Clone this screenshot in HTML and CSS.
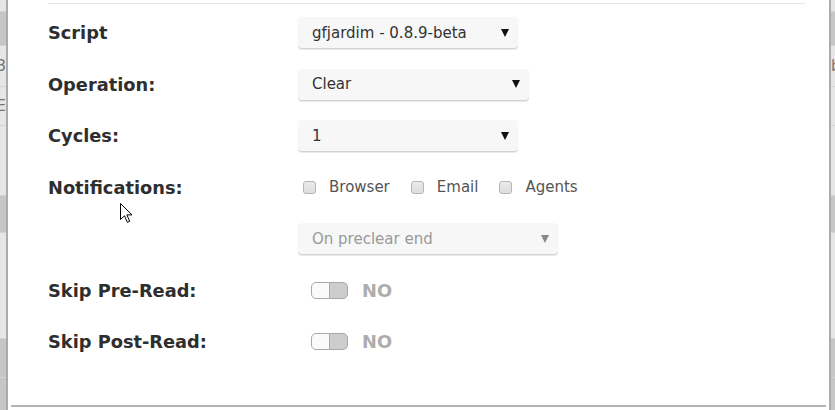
FILE: index.html
```html
<!DOCTYPE html>
<html lang="en">
<head>
    <meta charset="UTF-8">
    <meta name="viewport" content="width=device-width, initial-scale=1.0">
    <title>Preclear Disk</title>
    <link rel="stylesheet" href="styles.css">
</head>
<body>
    <div class="page">
        <div class="backdrop backdrop-left">
            <div class="band light b1"></div>
            <div class="band dark b2"></div>
            <div class="band light b3">3</div>
            <div class="band light b4">E</div>
            <div class="band light b5"></div>
            <div class="band dark b6"></div>
            <div class="band light b7"></div>
            <div class="band dark b8"></div>
            <div class="band dark b9"></div>
        </div>

        <div class="modal">
            <div class="modal-body">
                <div class="rule"></div>
                <form class="settings">
                    <div class="row">
                        <label class="label">Script</label>
                        <div class="select select-sm">
                            <span>gfjardim - 0.8.9-beta</span>
                            <span class="caret"></span>
                        </div>
                    </div>
                    <div class="row">
                        <label class="label">Operation:</label>
                        <div class="select select-md">
                            <span>Clear</span>
                            <span class="caret"></span>
                        </div>
                    </div>
                    <div class="row">
                        <label class="label">Cycles:</label>
                        <div class="select select-sm">
                            <span>1</span>
                            <span class="caret"></span>
                        </div>
                    </div>
                    <div class="row">
                        <label class="label">Notifications:</label>
                        <div class="checks">
                            <label class="check"><input type="checkbox"> Browser</label>
                            <label class="check"><input type="checkbox"> Email</label>
                            <label class="check"><input type="checkbox"> Agents</label>
                        </div>
                    </div>
                    <div class="row">
                        <span class="label"></span>
                        <div class="select select-lg disabled">
                            <span>On preclear end</span>
                            <span class="caret"></span>
                        </div>
                    </div>
                    <div class="row">
                        <label class="label">Skip Pre-Read:</label>
                        <div class="switch">
                            <span class="toggle"></span>
                            <span class="switch-text">NO</span>
                        </div>
                    </div>
                    <div class="row">
                        <label class="label">Skip Post-Read:</label>
                        <div class="switch">
                            <span class="toggle"></span>
                            <span class="switch-text">NO</span>
                        </div>
                    </div>
                </form>
            </div>
            <div class="footer-rule"></div>

            <svg class="cursor" width="14" height="20" viewBox="0 0 14 20">
                <path d="M0.5 0.5 L0.5 16.5 L4.5 12.8 L7.3 19.3 L9.7 18.3 L6.9 11.9 L12 11.9 Z" fill="#fff" stroke="#000" stroke-width="1" stroke-linejoin="miter"/>
            </svg>
        </div>

        <div class="backdrop backdrop-right">
            <div class="band light b1"></div>
            <div class="band dark b2"></div>
            <div class="band light b3">b</div>
            <div class="band light b4"></div>
            <div class="band light b5"></div>
            <div class="band dark b6"></div>
            <div class="band light b7"></div>
            <div class="band dark b8"></div>
            <div class="band dark b9"></div>
        </div>
    </div>
</body>
</html>
```

FILE: styles.css
```css
* {
    margin: 0;
    padding: 0;
    box-sizing: border-box;
}

body {
    background: #fff;
    font-family: 'DejaVu Sans', Verdana, sans-serif;
    color: #333;
    height: 410px;
    overflow: hidden;
}

.page {
    display: flex;
    height: 410px;
}

/* page behind the dialog */
.backdrop {
    display: flex;
    flex-direction: column;
    overflow: hidden;
    font-size: 15px;
    color: #777;
}

.backdrop-left {
    width: 6px;
    align-items: flex-end;
}

.backdrop-right {
    width: 4px;
}

.band {
    width: 100%;
    flex-shrink: 0;
    display: flex;
    align-items: center;
    border-bottom: 1px solid #d4d4d4;
}

.backdrop-left .band {
    justify-content: flex-end;
}

.band.light { background: #e6e6e6; }
.band.dark { background: #c6c6c6; }

.b1 { height: 12px; }
.b2 { height: 34px; }
.b3 { height: 41px; }
.b4 { height: 39px; }
.b5 { height: 70px; }
.b6 { height: 37px; }
.b7 { height: 106px; }
.b8 { height: 39px; }
.b9 { height: 40px; }

/* dialog */
.modal {
    flex: 1;
    position: relative;
    display: flex;
    flex-direction: column;
    background: #fff;
    border-left: 2px solid #ababab;
    border-right: 2px solid #ababab;
}

.modal-body {
    padding: 3px 24px 0 40px;
}

.rule {
    border-top: 1px solid #e6e6e6;
}

.settings {
    padding-top: 3px;
}

.row {
    display: flex;
    align-items: center;
    height: 51.5px;
}

.label {
    width: 250px;
    flex-shrink: 0;
    font-size: 17.8px;
    font-weight: bold;
    color: #2e2e2e;
}

.select {
    display: flex;
    align-items: center;
    justify-content: space-between;
    height: 31px;
    padding: 0 9px 0 14px;
    background: #f7f7f7;
    border-radius: 4px;
    box-shadow: 0 1px 1px rgba(0, 0, 0, 0.12), 0 2px 0 #ececec;
    font-size: 15px;
    color: #333;
}

.select-sm { width: 220px; }
.select-md { width: 231px; }
.select-lg { width: 260px; }

.caret {
    width: 0;
    height: 0;
    border-left: 4px solid transparent;
    border-right: 4px solid transparent;
    border-top: 8px solid #111;
}

.select.disabled {
    color: #999;
}

.select.disabled .caret {
    border-top-color: #888;
}

.checks {
    display: flex;
    gap: 21px;
    padding-left: 5px;
}

.check {
    display: flex;
    align-items: center;
    gap: 13px;
    font-size: 15px;
    color: #555;
}

.check input {
    appearance: none;
    width: 13px;
    height: 13px;
    margin: 0;
    border: 1px solid #b5b5b5;
    border-radius: 3px;
    background: linear-gradient(#eaeaea, #dedede);
}

.switch {
    display: flex;
    align-items: center;
    gap: 14px;
    padding-left: 13px;
}

.toggle {
    position: relative;
    width: 37px;
    height: 17px;
    border: 1px solid #a9a9a9;
    border-radius: 5px;
    background: #cdcdcd;
    overflow: hidden;
}

.toggle::before {
    content: '';
    position: absolute;
    top: 0;
    left: 0;
    width: 17px;
    height: 15px;
    background: #fafafa;
    border-right: 1px solid #a9a9a9;
    border-radius: 4px 0 0 4px;
}

.switch-text {
    font-size: 17.8px;
    font-weight: bold;
    color: #adadad;
}

.footer-rule {
    margin: auto 3px 3px;
    border-top: 2px solid #b3b3b3;
}

.cursor {
    position: absolute;
    left: 112px;
    top: 203px;
}
```
